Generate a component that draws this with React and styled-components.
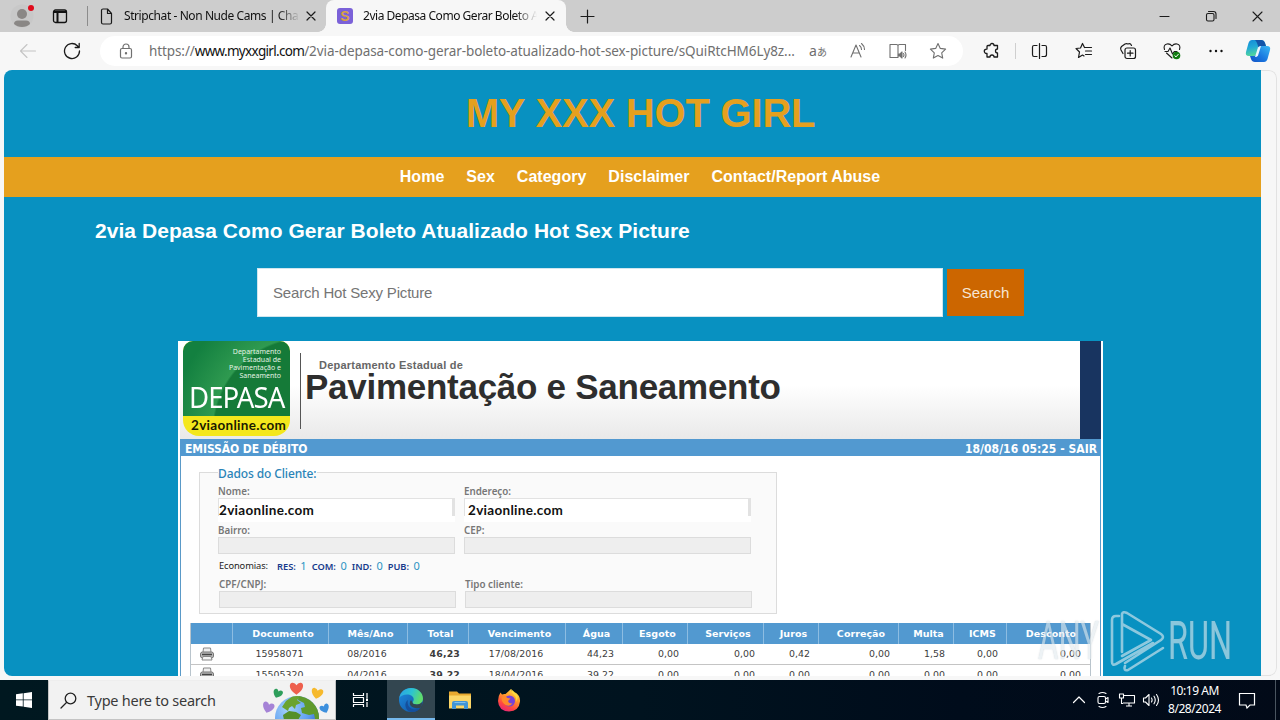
import React from "react";
import styled, { createGlobalStyle, css } from "styled-components";

const GlobalStyle = createGlobalStyle`
  * { box-sizing: border-box; }
  body { margin: 0; overflow: hidden; }
  svg { display: block; flex: none; }
`;

const ui = `"Noto Sans", "Open Sans", sans-serif`;
const arial = `"Liberation Sans", Arial, sans-serif`;
const verdana = `"DejaVu Sans", Verdana, sans-serif`;
const tahoma = `"DejaVu Sans Condensed", "DejaVu Sans", Tahoma, sans-serif`;
const calibri = `Lato, Calibri, sans-serif`;

const Screen = styled.div`
  position: relative;
  display: flex;
  flex-direction: column;
  width: 1280px;
  height: 720px;
  overflow: hidden;
  background: #f7f7f7;
  font-family: ${ui};
`;

const Slot = styled.div`
  display: flex;
  align-items: center;
  justify-content: center;
  flex: none;
  width: ${(p) => p.$w}px;
  height: ${(p) => p.$h || "100%"};
`;

const Icon = ({ w = 20, h = w, stroke = "#1b1b1b", sw = 1.1, children }) => (
  <svg width={w} height={h} viewBox={`0 0 ${w} ${h}`} fill="none" stroke={stroke} strokeWidth={sw} strokeLinecap="round" strokeLinejoin="round">
    {children}
  </svg>
);

/* ---------- tab strip ---------- */

const TabStrip = styled.div`
  display: flex;
  height: 32px;
  flex: none;
  background: #cdcdcd;
`;

const StripDivider = styled.div`
  width: 1px;
  height: 20px;
  margin: 6px 0 0 3px;
  background: #8c8c8c;
`;

const Tab = styled.div`
  position: relative;
  display: flex;
  align-items: center;
  width: ${(p) => p.$w}px;
  height: 32px;
  padding-left: ${(p) => p.$pl}px;
  ${(p) =>
    p.$active &&
    css`
      background: #f7f7f7;
      border-radius: 8px 8px 0 0;
      &::before, &::after {
        content: "";
        position: absolute;
        bottom: 0;
        width: 8px;
        height: 8px;
      }
      &::before { left: -8px; background: radial-gradient(circle at 0 0, #cdcdcd 7.5px, #f7f7f7 8px); }
      &::after { right: -8px; background: radial-gradient(circle at 100% 0, #cdcdcd 7.5px, #f7f7f7 8px); }
    `}
`;

const TabTitle = styled.div`
  width: ${(p) => p.$w}px;
  margin-left: ${(p) => p.$ml}px;
  overflow: hidden;
  white-space: nowrap;
  font-size: 12px;
  line-height: 18px;
  letter-spacing: ${(p) => p.$ls}px;
  color: #111;
  mask-image: linear-gradient(90deg, #000 calc(100% - 22px), transparent);
`;

const Favicon = styled.div`
  width: 16px;
  height: 16px;
  border-radius: 3px;
  background: #7b61d8;
  color: #d9a441;
  font: bold 14px/16px ${arial};
  text-align: center;
`;

const Spacer = styled.div`
  flex: 1;
`;

const Close = ({ s = 9, sw = 1.2 }) => (
  <Icon w={s + 2} sw={sw}>
    <path d={`M1 1L${s + 1} ${s + 1}M${s + 1} 1L1 ${s + 1}`} />
  </Icon>
);

function Tabs() {
  return (
    <TabStrip>
      <Slot $w={44}>
        <svg width="24" height="26" viewBox="0 0 24 26">
          <circle cx="12" cy="13" r="11.500" fill="#c8c8c8" />
          <circle cx="12" cy="11" r="5" fill="#8a8785" />
          <path d="M4 21q0-3.500 4-3.500h8q4 0 4 3.500q-3 3-8 3t-8-3z" fill="#8a8785" />
          <circle cx="21" cy="5" r="3" fill="#e00b1c" />
        </svg>
      </Slot>
      <Slot $w={32}>
        <Icon w={16} sw={1.3} stroke="#111">
          <rect x="1.500" y="2" width="13" height="12.500" rx="2" />
          <path d="M2 4h12M5.500 4v10" strokeWidth="2" />
        </Icon>
      </Slot>
      <Slot $w={8} />
      <StripDivider />
      <Tab $w={238} $pl={12}>
        <Icon w={13} h={17} sw={1.2}>
          <path d="M1.500 2.500a1.500 1.500 0 0 1 1.500-1.500h4.500l4 4.500v9a1.500 1.500 0 0 1-1.500 1.500h-7a1.500 1.500 0 0 1-1.500-1.500zM7.500 1v4.500h4" />
        </Icon>
        <TabTitle $w={176} $ml={11} $ls={-0.42}>Stripchat - Non Nude Cams | Cha</TabTitle>
        <Slot $w={22}><Close s={8} /></Slot>
      </Tab>
      <Tab $active $w={240} $pl={11}>
        <Favicon>S</Favicon>
        <TabTitle $w={174} $ml={10} $ls={-0.47}>2via Depasa Como Gerar Boleto A</TabTitle>
        <Slot $w={26}><Close s={8} /></Slot>
      </Tab>
      <Slot $w={43}>
        <Icon w={15} sw={1.2}><path d="M7.500 1v13M1 7.500h13" /></Icon>
      </Slot>
      <Spacer />
      <Slot $w={46}><Icon w={12} sw={1.1}><path d="M1 6.500h9" /></Icon></Slot>
      <Slot $w={46}>
        <Icon w={12} sw={1.1}>
          <rect x="1.500" y="3.500" width="7.500" height="7.500" rx="1.500" />
          <path d="M3.500 1.500h5a2.500 2.500 0 0 1 2.500 2.500v4.500" />
        </Icon>
      </Slot>
      <Slot $w={46}><Close s={9} sw={1.1} /></Slot>
    </TabStrip>
  );
}

/* ---------- toolbar ---------- */

const Toolbar = styled.div`
  display: flex;
  align-items: center;
  height: 38px;
  flex: none;
  padding-left: 6px;
`;

const AddressBar = styled.div`
  display: flex;
  align-items: center;
  width: 863px;
  height: 30px;
  margin-left: 6px;
  padding-left: 6px;
  border-radius: 15px;
  background: #fff;
`;

const Url = styled.div`
  display: flex;
  width: 652px;
  padding-left: 3px;
  white-space: nowrap;
  font-size: 13.500px;
  line-height: 20px;
  color: #707070;
`;

const UrlPart = styled.span`
  letter-spacing: ${(p) => p.$ls}px;
  color: ${(p) => p.$c || "inherit"};
`;

const TranslateGlyph = styled.div`
  display: flex;
  align-items: baseline;
  color: #6e6e6e;
  font: 14px/18px ${ui};
  span { font: 10px/18px "Noto Sans CJK JP", sans-serif; }
`;

const ToolDivider = styled.div`
  width: 1px;
  height: 16px;
  margin: 0 1px;
  background: #cfcfcf;
`;

const grey = "#707070";

function BrowserBar() {
  return (
    <Toolbar>
      <Slot $w={44}>
        <Icon w={18} stroke="#c4c4c4"><path d="M1.500 9h15M8 2.500L1.500 9L8 15.500" /></Icon>
      </Slot>
      <Slot $w={44}>
        <Icon w={18} sw={1.3}><path d="M16.500 9a7.500 7.500 0 1 1-2.200-5.300L16 5.500M16.200 1.500v4h-4" /></Icon>
      </Slot>
      <AddressBar>
        <Slot $w={40}>
          <Icon w={14} h={16} stroke={grey} sw={1.2}>
            <rect x="1.500" y="5.500" width="11" height="9.500" rx="1.500" />
            <path d="M4 5.500V4a3 3 0 0 1 6 0v1.500" />
            <circle cx="7" cy="10.300" r=".6" fill={grey} />
          </Icon>
        </Slot>
        <Url>
          <UrlPart $ls={-0.1}>https://</UrlPart>
          <UrlPart $ls={-0.69} $c="#111">www.myxxgirl.com</UrlPart>
          <UrlPart $ls={-0.08}>/2via-depasa-como-gerar-boleto-atualizado-hot-sex-picture/sQuiRtcHM6Ly8z...</UrlPart>
        </Url>
        <Slot $w={40}><TranslateGlyph>a<span>あ</span></TranslateGlyph></Slot>
        <Slot $w={40}>
          <Icon w={18} stroke={grey}>
            <path d="M2 15L7 3L12 15M3.700 11h6.600M10.500 3.500q2 1.500 2 4M12.500 1.500q3 2.500 3 6" />
          </Icon>
        </Slot>
        <Slot $w={40}>
          <Icon w={18} h={17} stroke={grey}>
            <path d="M9 3v11.500M9 14.500H1V1.500H7.500Q9 1.500 9 3Q9 1.500 10.500 1.500h6v6" />
            <path d="M9.500 11h1.500l2-2v6l-2-2h-1.500z" fill={grey} />
            <path d="M14.500 10.500q1 1.500 0 3M16 9q2 3 0 6" />
          </Icon>
        </Slot>
        <Slot $w={40}>
          <Icon w={18} stroke={grey}>
            <path d="M9 1.500l2.300 4.900 5.300.700-3.900 3.700 1 5.300L9 13.500l-4.700 2.600 1-5.300L1.400 7.100l5.300-.700z" />
          </Icon>
        </Slot>
      </AddressBar>
      <Slot $w={7} />
      <Slot $w={44}>
        <Icon w={18} sw={1.3}>
          <path d="M5 3.500h2a2 2 0 0 1 4 0h3.500v3.500a2 2 0 1 0 0 4v4h-3.500a2 2 0 0 0-4 0h-3v-3.500h-.5a2.200 2.200 0 0 1 0-4.400h.5v-2.600a1 1 0 0 1 1-1z" />
        </Icon>
      </Slot>
      <ToolDivider />
      <Slot $w={45}>
        <Icon w={17} h={18} sw={1.2}>
          <path d="M8.500 1.500v15M6 3.500h-3Q1.500 3.500 1.500 5v7.500q0 2 1.500 2h3M11 3.500h3q1.500 0 1.500 1.500v7.500q0 2-2 2h-2.500" />
        </Icon>
      </Slot>
      <Slot $w={44}>
        <Icon w={18} sw={1.2}>
          <path d="M9.500 5.500L7.500 1.500L5.500 6L1 6.500L4.500 10L3.500 15.500L7.500 13L9 14M10 5.500h6.500M10.500 9h6M10.500 12.500h6" />
        </Icon>
      </Slot>
      <Slot $w={44}>
        <Icon w={18} sw={1.2}>
          <rect x="6" y="6" width="10.500" height="10.500" rx="2" />
          <path d="M11.200 8.500v5.500M8.500 11.200h5.500M4 11.500L2 8q-1-2 .5-3.500L6 2q1.500-.8 3 0q2.500-1 3.500 1.500" />
        </Icon>
      </Slot>
      <Slot $w={44}>
        <Icon w={18} sw={1.1}>
          <path d="M1.500 7.500Q0 3 4 2q3-.5 5 2q2-2.500 5-2q4 1 2.500 5.500M2 9.500h3l2-3.500 2.500 6 1.800-2.500H14M3.500 11L9 16" />
          <circle cx="13.500" cy="13.500" r="3.800" fill="#107c10" stroke="none" />
          <path d="M11.800 13.700l1.200 1.200 2.300-2.600" stroke="#fff" strokeWidth="1" />
        </Icon>
      </Slot>
      <Slot $w={44}>
        <Icon w={18} h={4} stroke="none">
          <g fill="#111"><circle cx="3.500" cy="2" r="1.200" /><circle cx="9" cy="2" r="1.200" /><circle cx="14.500" cy="2" r="1.200" /></g>
        </Icon>
      </Slot>
      <Slot $w={40}>
        <svg width="26" height="24" viewBox="0 0 26 24">
          <defs>
            <linearGradient id="cpA" x1="0" y1="0" x2="0.300" y2="1">
              <stop offset="0" stopColor="#128ad8" /><stop offset=".5" stopColor="#22a9d6" /><stop offset="1" stopColor="#54d89a" />
            </linearGradient>
            <linearGradient id="cpB" x1="1" y1="0" x2="0" y2="1">
              <stop offset="0" stopColor="#3bb9f4" /><stop offset=".55" stopColor="#1a78e0" /><stop offset="1" stopColor="#1251c4" />
            </linearGradient>
          </defs>
          <path d="M7 1h9q3 0 4 3l1 3h-5q-2 0-3 3l-1.500 5q-1 2-3 2H4q-4 0-3-4l2.500-9Q4.500 1 7 1z" fill="url(#cpA)" />
          <path d="M16 1q3 0 4 3l1 3h-5q-1.500 0-2.400 1.700L12 4q-.8-2-2-3z" fill="#1454a8" />
          <path d="M19 23h-9q-3 0-4-3l-1-3h4q2 0 3-3l1.500-5q1-2 3-2H22q4 0 3 4l-2.500 9Q21.500 23 19 23z" fill="url(#cpB)" />
          <path d="M13 8.500q.8-1.500 3-1.500l-3 9.500q-.8 1.500-3 1.500z" fill="#eef6ff" />
        </svg>
      </Slot>
    </Toolbar>
  );
}

/* ---------- web page ---------- */

const Viewport = styled.div`
  display: flex;
  height: 606px;
  flex: none;
  margin: 0 3px 0 4px;
  border-radius: 8px;
  overflow: hidden;
  background: #f7f7f7;
`;

const Page = styled.div`
  width: 1257px;
  flex: none;
  height: 606px;
  overflow: hidden;
  background: #0891c1;
  font-family: ${arial};
`;

const Gutter = styled.div`
  flex: 1;
  border: 1px solid #e2e2e2;
  border-left: 0;
  border-radius: 0 8px 8px 0;
`;

const SiteHeader = styled.header`
  display: flex;
  align-items: center;
  justify-content: center;
  height: 87px;
  padding: 0 0 2px 16px;
  color: #e5a01e;
  font-weight: bold;
  font-size: 40px;
  line-height: 46px;
  letter-spacing: -0.2px;
`;

const Nav = styled.nav`
  display: flex;
  justify-content: center;
  gap: 22px;
  height: 40px;
  padding-left: 15px;
  background: #e5a01e;
  color: #fff;
  font-weight: bold;
  font-size: 16px;
  line-height: 39px;
  letter-spacing: 0.02px;
`;

const PageTitle = styled.h1`
  margin: 0;
  padding: 22px 0 0 91px;
  height: 71px;
  color: #fff;
  font-size: 21px;
  line-height: 24px;
  letter-spacing: 0.05px;
  white-space: nowrap;
`;

const SearchForm = styled.div`
  display: flex;
  align-items: center;
  gap: 4px;
  padding-left: 253px;
  font-size: 15px;
`;

const SearchInput = styled.div`
  width: 686px;
  height: 49px;
  padding-left: 15px;
  border: 1px solid #cfe6ef;
  background: #fff;
  color: #757575;
  line-height: 48px;
  letter-spacing: -0.18px;
`;

const SearchButton = styled.div`
  width: 77px;
  height: 47px;
  background: #cc6600;
  color: #f6e6d4;
  line-height: 47px;
  text-align: center;
`;

const Document = styled.div`
  width: 925px;
  height: 360px;
  margin: 24px 0 0 174px;
  padding: 0 2px;
  background: #fff;
`;

const Banner = styled.div`
  display: flex;
  height: 98px;
  padding-left: 3px;
  background: linear-gradient(#fff 45%, #e9e9e9);
`;

const LogoBox = styled.div`
  width: 107px;
  height: 95px;
  border-radius: 10px 10px 16px 16px;
  overflow: hidden;
  background: #f4e71c;
`;

const LogoGreen = styled.div`
  height: 75px;
  padding: 7px 9px 0 0;
  background: radial-gradient(circle at 115% 120%, #157a38 0 92px, #2f9a50 94px, #138040 135px);
  color: #e4f3e4;
  font: 7px/8px ${ui};
  text-align: right;
  white-space: pre-line;
`;

const LogoName = styled.div`
  margin: 2px -8px 0 6px;
  color: #fff;
  font: 29px/30px ${ui};
  letter-spacing: -1px;
  text-align: left;
  transform: scaleX(0.95);
  transform-origin: 0 0;
`;

const LogoSite = styled.div`
  padding-left: 8px;
  color: #1a1a00;
  font: bold 13.500px/19px ${calibri};
  letter-spacing: 0.3px;
`;

const BannerRule = styled.div`
  width: 1px;
  height: 76px;
  margin: 12px 0 0 10px;
  background: #555;
`;

const BannerText = styled.div`
  padding: 18px 0 0 4px;
  width: 770px;
  color: #2e2e2e;
  font-weight: bold;
  white-space: nowrap;
`;

const BannerSmall = styled.div`
  padding-left: 14px;
  color: #666;
  font-size: 11px;
  line-height: 13px;
  letter-spacing: 0.22px;
`;

const BannerBig = styled.div`
  font-size: 35px;
  line-height: 30px;
  letter-spacing: -0.27px;
`;

const BannerSide = styled.div`
  width: 21px;
  height: 98px;
  margin-left: auto;
  background: #183460;
`;

const StatusBar = styled.div`
  display: flex;
  justify-content: space-between;
  height: 17px;
  padding: 0 4px 0 5px;
  background: #5299d0;
  color: #fff;
  font: bold 12px/20px ${tahoma};
`;

const StatusText = styled.span`
  letter-spacing: ${(p) => p.$ls}px;
`;

const DocBody = styled.div`
  height: 260px;
  padding: 16px 0 0 9px;
  border: solid #5a9ac8;
  border-width: 0 1px;
`;

const ClientBox = styled.div`
  width: 578px;
  height: 142px;
  margin-left: 9px;
  padding-left: 18px;
  border: 1px solid #dcdcdc;
  background: #fafafa;
  font-family: ${ui};
`;

const Legend = styled.div`
  width: 99px;
  height: 14px;
  margin-top: -7px;
  background: linear-gradient(#fff 50%, #fafafa 50%);
  color: #2a84b8;
  font-size: 12px;
  font-weight: 500;
  line-height: 15px;
  letter-spacing: -0.12px;
  white-space: nowrap;
`;

const FieldRow = styled.div`
  display: flex;
  gap: 9px;
  margin: ${(p) => p.$m};
`;

const Field = styled.div`
  width: ${(p) => p.$w}px;
`;

const Label = styled.div`
  height: 12px;
  color: #777;
  font-size: 9.800px;
  font-weight: 600;
  line-height: 12px;
`;

const Value = styled.div`
  height: ${(p) => (p.$filled ? 24 : 17)}px;
  border: 1px solid #dcdcdc;
  background: #eee;
  color: #111;
  font: bold 13.500px/22px ${calibri};
  letter-spacing: 0.3px;
  padding-left: ${(p) => p.$pl || 0}px;
  ${(p) =>
    p.$filled &&
    css`
      border-right: 3px solid;
      border-image: linear-gradient(#e2e2e2 70%, #fff 70%) 1;
      border-bottom-width: 0;
      background: #fff;
    `}
`;

const Economies = styled.div`
  display: flex;
  gap: 5px;
  height: 14px;
  margin: 5px 0 6px 1px;
  color: #222;
  font-size: 9.300px;
  line-height: 14px;
  white-space: nowrap;
  b { color: #173a8c; font-weight: 600; margin-right: 4.500px; }
  i { color: #2a94c4; font-style: normal; font-size: 11px; }
`;

const EconomiesName = styled.span`
  width: 53px;
  letter-spacing: -0.1px;
`;

const Table = styled.div`
  width: 901px;
  margin-top: 9px;
  border: solid #b9c4cc;
  border-width: 0 1px;
  font-family: ${verdana};
`;

const Row = styled.div`
  display: grid;
  grid-template-columns: 42px 96px 79px 61px 97px 57px 65px 76px 55px 80px 55px 53px 83px;
  height: ${(p) => (p.$head ? 21 : 20.5)}px;
  border-bottom: ${(p) => (p.$head ? "0" : "1px solid #c4c4c4")};
  background: ${(p) => (p.$head ? "#5299d0" : "#fff")};
`;

const HeadCell = styled.div`
  padding-left: 5px;
  border-right: 1px solid #8dbde2;
  &:last-child { border-right: 0; }
  color: #fff;
  font-size: 9.500px;
  font-weight: bold;
  line-height: 21px;
  letter-spacing: 0.05px;
  text-align: center;
  white-space: nowrap;
`;

const Cell = styled.div`
  display: flex;
  align-items: center;
  justify-content: ${(p) => (p.$right ? "flex-end" : "center")};
  padding-right: ${(p) => (p.$right ? 9 : 3)}px;
  color: #3c3c3c;
  font-size: 9.400px;
  font-weight: ${(p) => (p.$bold ? "bold" : "normal")};
  line-height: 19px;
  letter-spacing: ${(p) => (p.$bold ? 0.15 : 0.05)}px;
`;

const PrintCell = styled.div`
  display: flex;
  align-items: center;
  padding-left: 8px;
`;

const heads = ["", "Documento", "Mês/Ano", "Total", "Vencimento", "Água", "Esgoto", "Serviços", "Juros", "Correção", "Multa", "ICMS", "Desconto"];
const bills = [
  ["15958071", "08/2016", "46,23", "17/08/2016", "44,23", "0,00", "0,00", "0,42", "0,00", "1,58", "0,00", "0,00"],
  ["15505320", "04/2016", "39,22", "18/04/2016", "39,22", "0,00", "0,00", "0,00", "0,00", "0,00", "0,00", "0,00"],
];

const Printer = () => (
  <svg width="16" height="14" viewBox="0 0 16 14">
    <path d="M4 5L4.500 1h7l.5 4" fill="#eee" stroke="#888" />
    <rect x="1.500" y="5" width="13" height="6" rx="2" fill="#b9b9b9" stroke="#777" />
    <path d="M3 7.500h10" stroke="#444" strokeWidth="1.500" />
    <path d="M4 9.500h8l1 3.500H3z" fill="#f4f4f4" stroke="#888" />
  </svg>
);

function BillDocument() {
  return (
    <Document>
      <Banner>
        <LogoBox>
          <LogoGreen>
            {"Departamento\nEstadual de\nPavimentação e\nSaneamento"}
            <LogoName>DEPASA</LogoName>
          </LogoGreen>
          <LogoSite>2viaonline.com</LogoSite>
        </LogoBox>
        <BannerRule />
        <BannerText>
          <BannerSmall>Departamento Estadual de</BannerSmall>
          <BannerBig>Pavimentação e Saneamento</BannerBig>
        </BannerText>
        <BannerSide />
      </Banner>
      <StatusBar>
        <StatusText $ls={-0.08}>EMISSÃO DE DÉBITO</StatusText>
        <StatusText $ls={0.02}>18/08/16 05:25 - SAIR</StatusText>
      </StatusBar>
      <DocBody>
        <ClientBox>
          <Legend>Dados do Cliente:</Legend>
          <FieldRow $m="6px 0 0">
            <Field $w={237}><Label>Nome:</Label><Value $filled>2viaonline.com</Value></Field>
            <Field $w={287}><Label>Endereço:</Label><Value $filled $pl={3}>2viaonline.com</Value></Field>
          </FieldRow>
          <FieldRow $m="3px 0 0">
            <Field $w={237}><Label>Bairro:</Label><Value /></Field>
            <Field $w={287}><Label>CEP:</Label><Value /></Field>
          </FieldRow>
          <Economies>
            <EconomiesName>Economias:</EconomiesName>
            <span><b>RES:</b><i>1</i></span>
            <span><b>COM:</b><i>0</i></span>
            <span><b>IND:</b><i>0</i></span>
            <span><b>PUB:</b><i>0</i></span>
          </Economies>
          <FieldRow $m="0 0 0 1px">
            <Field $w={237}><Label>CPF/CNPJ:</Label><Value /></Field>
            <Field $w={287}><Label>Tipo cliente:</Label><Value /></Field>
          </FieldRow>
        </ClientBox>
        <Table>
          <Row $head>{heads.map((h, i) => <HeadCell key={i}>{h}</HeadCell>)}</Row>
          {bills.map((bill) => (
            <Row key={bill[0]}>
              <PrintCell><Printer /></PrintCell>
              {bill.map((v, i) => (
                <Cell key={i} $bold={i === 2} $right={i === 2 || i > 3}>{v}</Cell>
              ))}
            </Row>
          ))}
        </Table>
      </DocBody>
    </Document>
  );
}

/* ---------- watermark ---------- */

const Watermark = styled.div`
  position: absolute;
  left: 1038px;
  top: 610px;
  display: flex;
  align-items: center;
  width: 194px;
  height: 62px;
  opacity: 0.6;
`;

const WatermarkText = styled.div`
  width: ${(p) => p.$w}px;
  color: #e2ebef;
  font: 400 53px/62px Roboto, sans-serif;
  text-shadow: 0 0 2px rgba(110, 125, 140, 0.55);
  transform: scaleX(${(p) => p.$s});
  transform-origin: 0 50%;
  white-space: nowrap;
`;

/* ---------- taskbar ---------- */

const Taskbar = styled.div`
  display: flex;
  align-items: stretch;
  height: 40px;
  margin-top: 4px;
  flex: none;
  background: linear-gradient(90deg, #001820, #00131f 50%, #000c1b 75%, #020a18);
`;

const TaskSearch = styled.div`
  display: flex;
  align-items: center;
  width: 288px;
  border: 1px solid #c4c4c4;
  border-top-color: #eee;
  background: #f2f2f2;
  color: #3a3a3a;
  font-size: 14.500px;
`;

const TaskSearchText = styled.div`
  width: 173px;
  margin-left: 10px;
  letter-spacing: -0.25px;
  white-space: nowrap;
`;

const AppSlot = styled.div`
  display: flex;
  align-items: center;
  justify-content: center;
  width: ${(p) => (p.$active ? 48 : 49)}px;
  height: 40px;
  padding-top: ${(p) => (p.$active ? 2 : 0)}px;
  background: ${(p) => (p.$active ? "#334650" : "transparent")};
  border-bottom: ${(p) => (p.$active ? "2px solid #76b9ed" : "0")};
`;

const Clock = styled.div`
  display: flex;
  flex-direction: column;
  align-items: center;
  width: 62px;
  padding: 2px 0 0 1px;
  color: #fff;
  font-size: 12px;
  line-height: 18px;
  letter-spacing: -0.45px;
  white-space: nowrap;
`;

const ShowDesktop = styled.div`
  width: 5px;
  border-left: 1px solid #4a5560;
`;

const heart = "M0 4.500C-7 0-6-5-3-5Q-1-5 0-3Q1-5 3-5C6-5 7 0 0 4.500z";

const EarthArt = () => (
  <svg width="76" height="38" viewBox="0 0 76 38">
    <defs>
      <radialGradient id="sea" cx=".3" cy=".3" r=".8">
        <stop offset="0" stopColor="#a4d2fb" /><stop offset=".6" stopColor="#5f9ff0" /><stop offset="1" stopColor="#2f62c8" />
      </radialGradient>
      <clipPath id="globe"><circle cx="38" cy="37" r="22" /></clipPath>
    </defs>
    <circle cx="38" cy="37" r="22" fill="url(#sea)" />
    <g clipPath="url(#globe)">
      <path d="M23 26l4-6 7-5h8l-4 4 4 3-5 2-1 4-3-3-3 2-1 3z" fill="#6ba32f" />
      <path d="M40 14h10l13 14-1 14h-5l-2-9-5 1-7-2-1-5 4-1-1-4-6-3z" fill="#5f9a2c" />
      <path d="M24 34l6-4 7 1 5 3-3 5H25z" fill="#558f28" />
    </g>
    <path d={heart} transform="translate(37.500 8) scale(1.250)" fill="#ee5f4d" />
    <path d={heart} transform="translate(18.500 13) rotate(22) scale(.9)" fill="#2e9e5b" />
    <path d={heart} transform="translate(58 13) rotate(12) scale(1.100)" fill="#f6b92c" />
    <path d={heart} transform="translate(9 27) rotate(18) scale(1.100)" fill="#a583d6" />
    <path d={heart} transform="translate(66 28) rotate(-24) scale(.9)" fill="#3c8fdd" />
  </svg>
);

const EdgeLogo = () => (
  <svg width="26" height="26" viewBox="0 0 26 26">
    <defs>
      <linearGradient id="edgeTop" x1="0" y1="0" x2="1" y2=".3">
        <stop offset="0" stopColor="#2b9fe6" /><stop offset=".55" stopColor="#2cc3d2" /><stop offset="1" stopColor="#5fdc6c" />
      </linearGradient>
      <linearGradient id="edgeLow" x1="0" y1="0" x2="1" y2="1">
        <stop offset="0" stopColor="#1f8ee0" /><stop offset="1" stopColor="#0f4fa0" />
      </linearGradient>
    </defs>
    <circle cx="13" cy="13" r="12" fill="url(#edgeLow)" />
    <path d="M1.200 11C2.500 4.500 7.500 1 13 1c7 0 12 5 12 10.500 0 4-3 6-6.200 6-2.500 0-4.300-1-4.300-2 0-.8 1.200-1.200 1.200-3.300C15.700 9.500 12.500 7.500 9 7.500c-3.500 0-6.300 1.500-7.800 3.500z" fill="url(#edgeTop)" />
    <path d="M10 13c-1.500 5 2 9.500 7 9.500 3 0 5-1 6.500-2.500C21 23.500 17 25.500 13 25c-6-1.500-7.500-9-3-12z" fill="#154f9c" />
    <path d="M14.500 15.500c0 1 1.800 2 4.300 2 2.200 0 4.200-.9 5.300-2.500L23.500 20c-3 2-8.500 1.500-11-1.500-1-1.500-1-3.500 .5-5.500z" fill="#334650" />
  </svg>
);

const FolderLogo = () => (
  <svg width="22" height="20" viewBox="0 0 22 20">
    <path d="M0 1.500h8l2 2h12V18H0z" fill="#e8a92f" />
    <path d="M0 5.500h22V18.500H0z" fill="#fbd667" />
    <path d="M3 19v-6q0-2 2-2h12q2 0 2 2v6h-4v-3.500H7V19z" fill="#4095d6" />
    <path d="M5.500 12.500h11" stroke="#7fc0ee" />
  </svg>
);

const FirefoxLogo = () => (
  <svg width="24" height="24" viewBox="0 0 24 24">
    <defs>
      <linearGradient id="fox" x1=".8" y1="0" x2=".3" y2="1">
        <stop offset="0" stopColor="#ffe14a" /><stop offset=".4" stopColor="#ff9a2b" /><stop offset=".75" stopColor="#ff4740" /><stop offset="1" stopColor="#e5257a" />
      </linearGradient>
    </defs>
    <path d="M3.500 4.500L5 6.500q1.500-.8 3.500-.5L14 1q0 2 2.500 3.500L18 6l.5-1.500Q23.500 8 23 13.500 22 23 12 23.500 1.500 23 1 13q0-5 2.500-8.500z" fill="url(#fox)" />
    <circle cx="12.500" cy="13" r="5.500" fill="#7542d8" />
    <path d="M4.500 9.500q3-2 6 .5l3 .5-2.500 2.500q1 3 4.500 2.500-3 3.500-7 1.500-4-2.500-4-7.500z" fill="#ff8a2a" />
    <path d="M14 1q0 3.500 3 6t2 7q4-6-1-9.500z" fill="#ffd83d" />
  </svg>
);

function WindowsTaskbar() {
  return (
    <Taskbar>
      <Slot $w={48}>
        <svg width="16" height="16" viewBox="0 0 16 16" fill="#fff">
          <path d="M0 2.300L6.800 1.300V7.500H0zM7.600 1.200L16 0V7.500H7.600zM0 8.300H6.800V14.600L0 13.700zM7.600 8.300H16V16L7.600 14.800z" />
        </svg>
      </Slot>
      <TaskSearch>
        <Slot $w={11} />
        <Icon w={17} stroke="#222" sw={1.3}><circle cx="10.500" cy="6.500" r="5.300" /><path d="M6.500 10.500L1 16" /></Icon>
        <TaskSearchText>Type here to search</TaskSearchText>
        <EarthArt />
      </TaskSearch>
      <Slot $w={49} $h="40px">
        <Icon w={18} stroke="#fff" sw={1.2}>
          <path d="M1.500 2v2.500h10V2M1.500 16v-2.500h10V16M1.500 6.500h10v5h-10zM15 2v5M15 11v5" strokeLinecap="butt" />
          <rect x="14" y="7.500" width="2" height="2.500" fill="#fff" stroke="none" />
        </Icon>
      </Slot>
      <Slot $w={2} />
      <AppSlot $active><EdgeLogo /></AppSlot>
      <AppSlot><FolderLogo /></AppSlot>
      <AppSlot><FirefoxLogo /></AppSlot>
      <Spacer />
      <Slot $w={24}><Icon w={14} h={10} stroke="#fff" sw={1.2}><path d="M1.500 7.500L7 2l5.500 5.500" /></Icon></Slot>
      <Slot $w={24}>
        <Icon w={14} h={18} stroke="#fff">
          <rect x="2" y="5.500" width="7.500" height="7" rx="1.500" /><path d="M9.500 8l2.500-1.500v5L9.500 10M3 2.500q3.500-2 7 0M3 15.500q3.500 2 7 0" />
        </Icon>
      </Slot>
      <Slot $w={24}>
        <Icon w={18} h={16} stroke="#fff">
          <path d="M6 3.500h10.500v7.500H5M11 11v3M8 14h6M1.500 2h4v4h-4zM3.500 6v5.500h1.500" strokeLinecap="butt" />
        </Icon>
      </Slot>
      <Slot $w={24}>
        <Icon w={18} h={16} stroke="#fff">
          <path d="M1.500 6h2l3.500-3.500v11L3.500 10h-2zM9.500 6q1.200 2 0 4M12 4.200q2.500 3.800 0 7.600M14.500 2.500q4 5.500 0 11" />
        </Icon>
      </Slot>
      <Clock><span>10:19 AM</span><span>8/28/2024</span></Clock>
      <Slot $w={44}>
        <Icon w={18} h={17} stroke="#fff" sw={1.2}><path d="M1.500 1.500h15v11.500h-4.500L9 16 8 13H1.500z" strokeLinejoin="miter" /></Icon>
      </Slot>
      <Slot $w={6} />
      <ShowDesktop />
    </Taskbar>
  );
}

export default function App() {
  return (
    <>
      <GlobalStyle />
      <Screen>
        <Tabs />
        <BrowserBar />
        <Viewport>
          <Page>
            <SiteHeader>MY XXX HOT GIRL</SiteHeader>
            <Nav>
              <span>Home</span>
              <span>Sex</span>
              <span>Category</span>
              <span>Disclaimer</span>
              <span>Contact/Report Abuse</span>
            </Nav>
            <PageTitle>2via Depasa Como Gerar Boleto Atualizado Hot Sex Picture</PageTitle>
            <SearchForm>
              <SearchInput>Search Hot Sexy Picture</SearchInput>
              <SearchButton>Search</SearchButton>
            </SearchForm>
            <BillDocument />
          </Page>
          <Gutter />
        </Viewport>
        <WindowsTaskbar />
        <Watermark>
          <WatermarkText $w={71} $s={0.59}>ANY</WatermarkText>
          <Icon w={58} h={62} stroke="#e6eef2" sw={2.6}>
            <path d="M10 6H7Q3 6 3 10V52Q3 56 7 54L44 33M13 42V4Q14 1 18 3L52 24Q56 27 52 30L16 53M13 14L42 30L13 46M16 56Q14 61 19 60L54 38" />
          </Icon>
          <Slot $w={1} />
          <WatermarkText $w={64} $s={0.61}>RUN</WatermarkText>
        </Watermark>
      </Screen>
    </>
  );
}
